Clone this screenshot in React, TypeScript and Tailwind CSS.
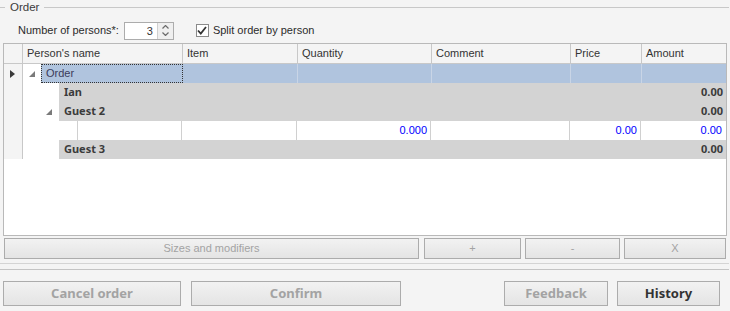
import React from "react";

const cols = [
  { key: "ind", w: 19 },
  { key: "name", w: 160, label: "Person's name" },
  { key: "item", w: 115, label: "Item" },
  { key: "qty", w: 134, label: "Quantity" },
  { key: "comment", w: 139, label: "Comment" },
  { key: "price", w: 71, label: "Price" },
  { key: "amount", w: 84, label: "Amount" },
];

function Expander() {
  return (
    <svg width="6" height="6" viewBox="0 0 6 6">
      <polygon points="6,0 6,6 0,6" fill="#7a7a7a" />
    </svg>
  );
}

function RowIndicator() {
  return (
    <svg width="5" height="8" viewBox="0 0 5 8">
      <polygon points="0,0 5,4 0,8" fill="#3a3a3a" />
    </svg>
  );
}

function GroupRow({ name, expander }: { name: string; expander?: boolean }) {
  return (
    <div className="flex h-[19px]">
      <div className="w-[19px] shrink-0 bg-[#f4f4f4] border-r border-[#c8c8c8]" />
      <div className="w-[36px] shrink-0 bg-white flex items-center justify-end pr-[7px]">
        {expander && <Expander />}
      </div>
      <div className="flex-1 bg-[#d3d3d3] flex items-center justify-between pl-[5px] pr-[3px] font-['Noto_Sans',sans-serif] font-bold text-[#3b3b3b]">
        <span>{name}</span>
        <span>0.00</span>
      </div>
    </div>
  );
}

function Btn({
  label,
  w,
  disabled,
  bold,
  h,
  className = "",
}: {
  label: string;
  w: number;
  disabled?: boolean;
  bold?: boolean;
  h: string;
  className?: string;
}) {
  return (
    <div
      style={{ width: w }}
      className={
        "shrink-0 border border-[#acacac] bg-gradient-to-b from-[#f2f2f2] to-[#e4e4e4] flex items-center justify-center " +
        h +
        " " +
        className +
        (bold ? " font-['Noto_Sans',sans-serif] font-bold text-[13px]" : " text-[11px]") +
        (disabled ? " text-[#a3a3a3]" : " text-[#333]")
      }
    >
      {label}
    </div>
  );
}

export default function App() {
  return (
    <div className="w-[730px] h-[311px] bg-[#f4f4f4] font-['Liberation_Sans',Arial,sans-serif] text-[11px] text-[#2b2b2b] overflow-hidden">
      {/* group header */}
      <div className="flex items-center h-[15px]">
        <div className="w-[5px] h-px bg-[#c8c8c8]" />
        <span className="px-[5px] text-[11.5px] leading-none text-[#3b3b3b]">Order</span>
        <div className="flex-1 h-px bg-[#c8c8c8] mr-px" />
      </div>

      {/* options */}
      <div className="flex items-center h-[28px] pl-[18px] pt-[3px]">
        <span className="text-[#2b2b2b]">Number of persons*:</span>
        <div className="ml-[5px] w-[50px] h-[18px] border border-[#acacac] bg-white flex">
          <div className="flex-1 text-right pr-[4px] leading-[16px] text-[#333]">3</div>
          <div className="w-[16px] bg-[#efefef] border-l border-[#d0d0d0] flex flex-col items-center justify-center gap-[3px]">
            <svg width="7" height="4" viewBox="0 0 7 4">
              <polyline points="0.5,3.5 3.5,0.5 6.5,3.5" fill="none" stroke="#6b6b6b" strokeWidth="1.2" />
            </svg>
            <svg width="7" height="4" viewBox="0 0 7 4">
              <polyline points="0.5,0.5 3.5,3.5 6.5,0.5" fill="none" stroke="#6b6b6b" strokeWidth="1.2" />
            </svg>
          </div>
        </div>
        <div className="ml-[22px] w-[13px] h-[13px] border border-[#8a8a8a] bg-white flex items-center justify-center">
          <svg width="10" height="9" viewBox="0 0 10 9">
            <polyline points="1,4.5 3.8,7.5 9,1" fill="none" stroke="#333" strokeWidth="1.8" />
          </svg>
        </div>
        <span className="ml-[4px]">Split order by person</span>
      </div>

      {/* grid */}
      <div className="ml-[3px] w-[724px] h-[193px] border border-[#b9b9b9] bg-white flex flex-col">
        <div className="flex h-[20px] bg-[#f4f4f4] border-b border-[#c8c8c8]">
          {cols.map((c, i) => (
            <div
              key={c.key}
              style={{ width: c.w }}
              className={
                "shrink-0 flex items-center pl-[4px] text-[#333] " +
                (i < cols.length - 1 ? "border-r border-[#c8c8c8]" : "")
              }
            >
              {c.label}
            </div>
          ))}
        </div>

        {/* Order row */}
        <div className="flex h-[19px]">
          <div className="w-[19px] shrink-0 bg-[#f4f4f4] border-r border-[#c8c8c8] flex items-center justify-center pr-px">
            <RowIndicator />
          </div>
          <div className="w-[18px] shrink-0 bg-white flex items-center justify-end pr-[6px]">
            <Expander />
          </div>
          <div className="w-[142px] shrink-0 bg-[#b0c4de] border border-dotted border-[#333] flex items-center pl-[4px] text-[#3b3b5b]">
            Order
          </div>
          {cols.slice(2).map((c, i) => (
            <div
              key={c.key}
              style={{ width: c.w }}
              className={"shrink-0 bg-[#b0c4de] " + (i < 4 ? "border-r border-[#c9d5e6]" : "")}
            />
          ))}
        </div>

        <GroupRow name="Ian" />
        <GroupRow name="Guest 2" expander />

        {/* item row */}
        <div className="flex h-[19px] text-[#0000ff]">
          <div className="w-[19px] shrink-0 bg-[#f4f4f4] border-r border-[#c8c8c8]" />
          <div className="w-[55px] shrink-0 bg-white border-r border-[#d0d0d0]" />
          <div className="w-[104px] shrink-0 border-r border-[#d0d0d0]" />
          <div className="w-[115px] shrink-0 border-r border-[#d0d0d0]" />
          <div className="w-[134px] shrink-0 border-r border-[#d0d0d0] flex items-center justify-end pr-[3px]">0.000</div>
          <div className="w-[139px] shrink-0 border-r border-[#d0d0d0]" />
          <div className="w-[71px] shrink-0 border-r border-[#d0d0d0] flex items-center justify-end pr-[3px]">0.00</div>
          <div className="w-[84px] shrink-0 flex items-center justify-end pr-[3px]">0.00</div>
        </div>

        <GroupRow name="Guest 3" />
        <div className="flex-1 bg-white" />
      </div>

      {/* grid buttons */}
      <div className="flex h-[21px] mt-[2px] pl-[4px]">
        <Btn label="Sizes and modifiers" w={415} disabled h="h-[21px]" />
        <Btn label="+" w={97} disabled h="h-[21px]" className="ml-[5px]" />
        <Btn label="-" w={95} disabled h="h-[21px]" className="ml-[4px]" />
        <Btn label="X" w={102} disabled h="h-[21px]" className="ml-[4px]" />
      </div>

      <div className="mt-[4px] h-px bg-[#d4d4d4] mr-px" />
      <div className="mt-[5px] h-px bg-[#c4c4c4] mr-px" />

      {/* footer buttons */}
      <div className="flex mt-[11px] pl-[3px]">
        <Btn label="Cancel order" w={178} disabled bold h="h-[25px]" />
        <Btn label="Confirm" w={210} disabled bold h="h-[25px]" className="ml-[10px]" />
        <Btn label="Feedback" w={104} disabled bold h="h-[25px]" className="ml-[103px]" />
        <Btn label="History" w={103} bold h="h-[25px]" className="ml-[9px]" />
      </div>
    </div>
  );
}
